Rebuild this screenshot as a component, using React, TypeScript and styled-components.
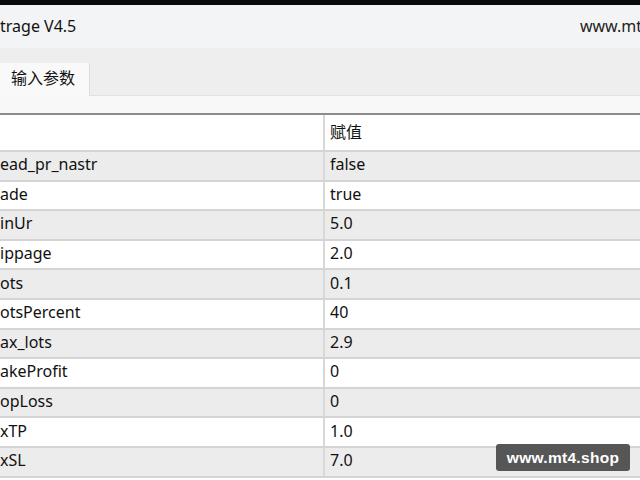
import styled, { createGlobalStyle } from "styled-components";

const GlobalStyle = createGlobalStyle`
  html, body {
    margin: 0;
    padding: 0;
    background: #ffffff;
    overflow: hidden;
  }
  body {
    font-family: "Noto Sans", "Noto Sans CJK SC", sans-serif;
    color: #111;
  }
`;

const Window = styled.div`
  position: relative;
  width: 640px;
  height: 480px;
  display: flex;
  flex-direction: column;
  border-top: 5px solid #0a0a0a;
  box-sizing: border-box;
  overflow: hidden;
`;

const TitleBar = styled.div`
  height: 43px;
  flex-shrink: 0;
  display: flex;
  align-items: center;
  justify-content: space-between;
  background: #f3f4f6;
  font-size: 16px;
  white-space: nowrap;
`;

const Title = styled.span`
  margin-top: -2px;
`;

const Site = styled.span`
  margin-right: -2px;
  margin-top: -2px;
  color: #222;
`;

const TabStrip = styled.div`
  height: 48px;
  flex-shrink: 0;
  display: flex;
  align-items: flex-end;
  background: #eeeeee;
  border-bottom: 1px solid #e2e2e2;
  box-sizing: border-box;
`;

const Tab = styled.div`
  height: 33px;
  width: 90px;
  box-sizing: border-box;
  display: flex;
  align-items: center;
  padding: 0 0 6px 11px;
  background: #f9f9f9;
  border-right: 1px solid #dcdcdc;
  margin-bottom: -1px;
  font-size: 16px;
  color: #111;
`;

const TabPanel = styled.div`
  height: 17px;
  flex-shrink: 0;
  background: #f8f8f8;
  border-bottom: 2px solid #8c8c8c;
`;

const Table = styled.div`
  flex: 1;
  display: flex;
  flex-direction: column;
  background: #ffffff;
`;

const Row = styled.div<{ $shaded?: boolean; $header?: boolean }>`
  height: ${(p) => (p.$header ? "37px" : "29.6px")};
  flex-shrink: 0;
  display: grid;
  grid-template-columns: 323px 1fr;
  background: ${(p) => (p.$shaded ? "#ececec" : "#ffffff")};
  border-bottom: 2px solid #d4d4d4;
  box-sizing: border-box;
  font-size: 16px;
`;

const Cell = styled.div<{ $value?: boolean }>`
  display: flex;
  align-items: center;
  white-space: nowrap;
  overflow: hidden;
  padding-bottom: 3px;
  padding-left: ${(p) => (p.$value ? "5px" : "0")};
  border-left: ${(p) => (p.$value ? "2px solid #d8d8d8" : "none")};
`;

const Watermark = styled.div`
  position: absolute;
  left: 496px;
  top: 439px;
  width: 134px;
  height: 27px;
  border-radius: 3px;
  background: #565656;
  color: #ffffff;
  font-family: "Liberation Sans", Arial, sans-serif;
  font-size: 15.5px;
  font-weight: bold;
  display: flex;
  align-items: center;
  justify-content: center;
  letter-spacing: 0.3px;
`;

const params: [string, string][] = [
  ["ead_pr_nastr", "false"],
  ["ade", "true"],
  ["inUr", "5.0"],
  ["ippage", "2.0"],
  ["ots", "0.1"],
  ["otsPercent", "40"],
  ["ax_lots", "2.9"],
  ["akeProfit", "0"],
  ["opLoss", "0"],
  ["xTP", "1.0"],
  ["xSL", "7.0"],
];

const App: React.FC = () => {
  return (
    <>
      <GlobalStyle />
      <Window>
        <TitleBar>
          <Title>trage V4.5</Title>
          <Site>www.mt</Site>
        </TitleBar>
        <TabStrip>
          <Tab>输入参数</Tab>
        </TabStrip>
        <TabPanel />
        <Table>
          <Row $header>
            <Cell></Cell>
            <Cell $value>赋值</Cell>
          </Row>
          {params.map(([name, value], i) => (
            <Row key={name} $shaded={i % 2 === 0}>
              <Cell>{name}</Cell>
              <Cell $value>{value}</Cell>
            </Row>
          ))}
        </Table>
        <Watermark>www.mt4.shop</Watermark>
      </Window>
    </>
  );
};

export default App;
